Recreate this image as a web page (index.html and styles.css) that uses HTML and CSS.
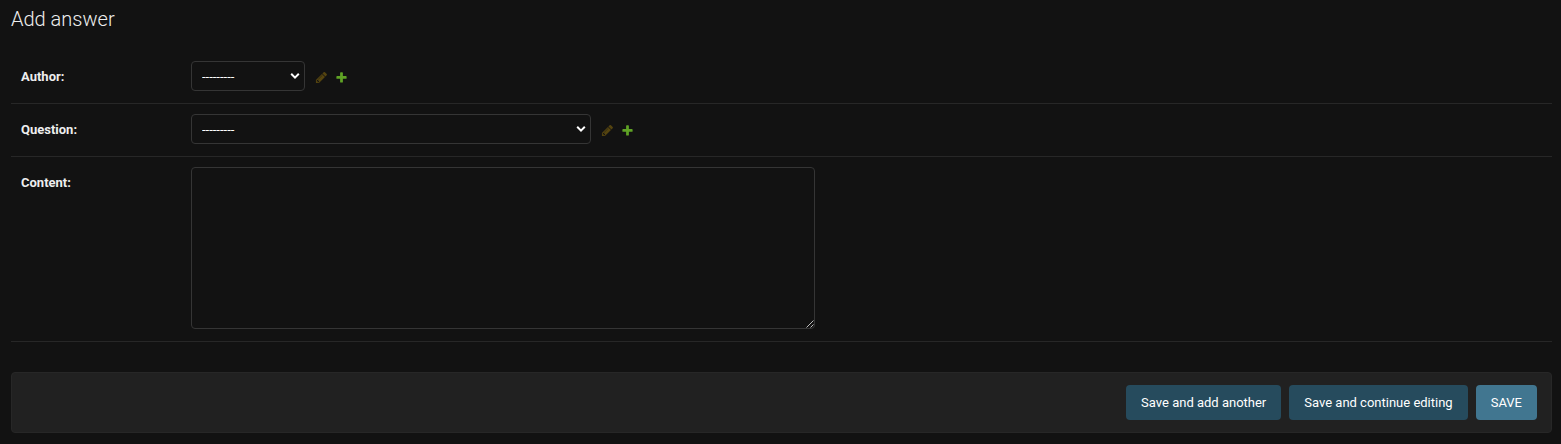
FILE: index.html
```html
<!DOCTYPE html>
<html lang="en">
<head>
<meta charset="utf-8">
<title>Add answer</title>
<link rel="stylesheet" href="styles.css">
</head>
<body>
<svg class="sprite" aria-hidden="true">
  <symbol id="pencil" viewBox="0 0 1792 1792"><path d="M491 1536l91-91-235-235-91 91v107h128v128h107zm523-928q0-22-22-22-10 0-17 7l-542 542q-7 7-7 17 0 22 22 22 10 0 17-7l542-542q7-7 7-17zm-54-192l416 416-832 832h-416v-416zm683 96q0 53-37 90l-166 166-416-416 166-165q36-38 90-38 53 0 91 38l235 234q37 39 37 91z"/></symbol>
  <symbol id="plus" viewBox="0 0 1792 1792"><path d="M1600 796v192q0 40-28 68t-68 28h-416v416q0 40-28 68t-68 28h-192q-40 0-68-28t-28-68v-416h-416q-40 0-68-28t-28-68v-192q0-40 28-68t68-28h416v-416q0-40 28-68t68-28h192q40 0 68 28t28 68v416h416q40 0 68 28t28 68z"/></symbol>
  <symbol id="chevron" viewBox="0 0 10 8"><path d="M1.2 1.8L5 5.6L8.8 1.8" fill="none" stroke="#fff" stroke-width="2"/></symbol>
</svg>
<main class="content">
  <h1 class="title">Add answer</h1>
  <form>
    <div class="form-row">
      <label class="label" for="author">Author:</label>
      <div class="field">
        <select class="select select-author" id="author"><option>---------</option></select>
        <svg class="chevron"><use href="#chevron"/></svg>
      </div>
      <svg class="icon icon-change"><use href="#pencil"/></svg>
      <svg class="icon icon-add"><use href="#plus"/></svg>
    </div>
    <div class="form-row">
      <label class="label" for="question">Question:</label>
      <div class="field">
        <select class="select select-question" id="question"><option>---------</option></select>
        <svg class="chevron"><use href="#chevron"/></svg>
      </div>
      <svg class="icon icon-change"><use href="#pencil"/></svg>
      <svg class="icon icon-add"><use href="#plus"/></svg>
    </div>
    <div class="form-row">
      <label class="label" for="body">Content:</label>
      <div class="field">
        <textarea class="textarea" id="body"></textarea>
        <svg class="grip" viewBox="0 0 8 8"><path d="M0.5 7.5L7.5 0.5M4.5 7.5L7.5 4.5" stroke="#bbb" stroke-width="1"/></svg>
      </div>
    </div>
    <div class="submit-row">
      <button class="button" type="button">Save and add another</button>
      <button class="button" type="button">Save and continue editing</button>
      <button class="button button-default" type="button">SAVE</button>
    </div>
  </form>
</main>
</body>
</html>
```
FILE: styles.css
```css
* { box-sizing: border-box; }
body {
  margin: 0;
  background: #121212;
  color: #eee;
  font: 13px/16px Roboto, sans-serif;
  color-scheme: dark;
}
.sprite { display: none; }
.content { padding: 7px 9px 0 11px; }
.title {
  margin: 0 0 20px;
  font-size: 20px;
  line-height: 24px;
  font-weight: 300;
}
.form-row {
  display: flex;
  align-items: flex-start;
  padding: 10px 10px 12px;
  border-bottom: 1px solid #272727;
}
.label {
  width: 170px;
  padding-top: 8px;
  font-weight: 700;
}
.field {
  display: flex;
  position: relative;
}
.select, .textarea {
  margin: 0;
  border: 1px solid #353535;
  border-radius: 4px;
  background-color: #121212;
  color: #eee;
  font: 13px Roboto, sans-serif;
}
.select {
  appearance: none;
  height: 30px;
  padding: 5px 10px;
  color: #fff;
}
.select-author { width: 114px; }
.select-question { width: 400px; }
.chevron {
  position: absolute;
  top: 11px;
  right: 5px;
  width: 10px;
  height: 8px;
  pointer-events: none;
}
.textarea {
  display: block;
  width: 624px;
  height: 162px;
  padding: 5px 6px;
  resize: none;
}
.grip {
  position: absolute;
  right: 1px;
  bottom: 1px;
  width: 8px;
  height: 8px;
  pointer-events: none;
}
.icon {
  width: 13px;
  height: 13px;
  margin-top: 10px;
}
.icon-change { margin-left: 10px; fill: #efb80b; opacity: .3; }
.icon-add { margin-left: 7px; fill: #5fa225; }
.submit-row {
  display: flex;
  justify-content: flex-end;
  gap: 8px;
  margin-top: 30px;
  height: 61px;
  padding: 12px 14px;
  border: 1px solid #272727;
  border-radius: 4px;
  background: #212121;
}
.button {
  height: 35px;
  padding: 0 15px;
  border: 0;
  border-radius: 4px;
  background: #264b5d;
  color: #fff;
  font: 13px Roboto, sans-serif;
}
.button-default { background: #417690; }
```
